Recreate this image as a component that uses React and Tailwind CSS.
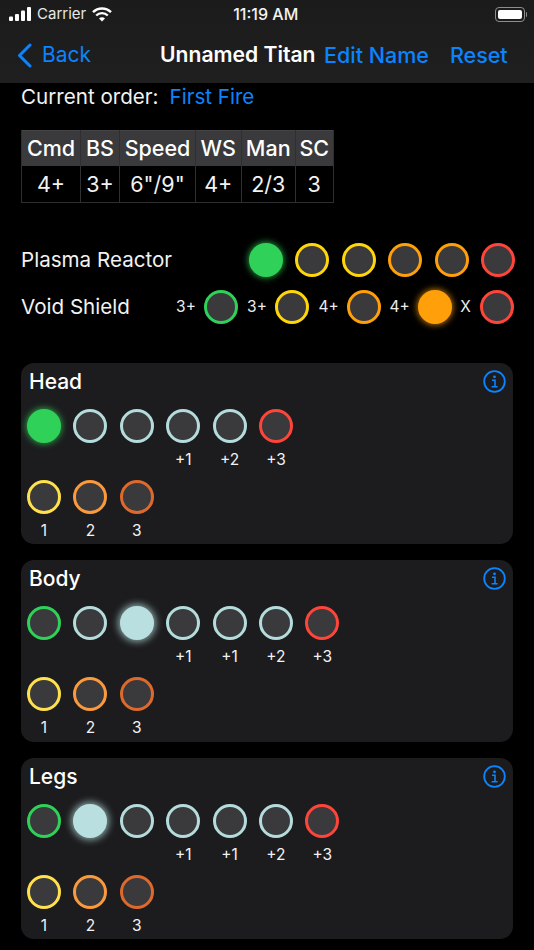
import React from "react";

const GREEN = "border-[#30d158]";
const PALE = "border-[#b5dcdc]";
const RED = "border-[#ff453a]";
const YELLOW = "border-[#ffd60a]";
const ORANGE = "border-[#ff9f0a]";

function Dot({ color, fill }) {
  return <div className={`w-[34px] h-[34px] rounded-full shrink-0 border-[3px] ${color} ${fill || "bg-[#3a3a3c]"}`} />;
}

function Slot({ color, fill, label }) {
  return (
    <div className="w-[34px] flex flex-col items-center shrink-0">
      <Dot color={color} fill={fill} />
      <div className="h-[34px] pt-[8px] text-[15.5px] leading-[18px] text-[#f2f2f2] whitespace-nowrap">{label}</div>
    </div>
  );
}

const lit = {
  green: "bg-[#30d158] shadow-[0_0_6px_1px_rgba(48,209,88,0.7)]",
  orange: "bg-[#ff9f0a] shadow-[0_0_6px_1px_rgba(255,159,10,0.7)]",
  pale: "bg-[#b9dfe0] shadow-[0_0_7px_2px_rgba(185,223,224,0.7)]",
};

function Card({ title, track }) {
  return (
    <div className="relative h-[181.5px] rounded-[13px] bg-[#1c1c1e] px-[6px] pt-[6px]">
      <div className="h-[27px] pl-[2px] text-[21px] leading-[26px] font-medium text-white">{title}</div>
      <svg className="absolute right-[7px] top-[7px] w-[23px] h-[23px]" viewBox="0 0 23 23" fill="none" stroke="#0a84ff">
        <circle cx="11.5" cy="11.5" r="10.3" strokeWidth="1.8" />
        <circle cx="11.5" cy="6.8" r="1.4" fill="#0a84ff" stroke="none" />
        <path d="M9 10.3h3v6.3M8.6 16.8h6" strokeWidth="1.6" />
      </svg>
      <div className="flex gap-[12.4px] mt-[13px]">
        {track.map((s, i) => (
          <Slot key={i} {...s} />
        ))}
      </div>
      <div className="flex gap-[12.4px] mt-[3px]">
        <Slot color="border-[#ffe14d]" label="1" />
        <Slot color="border-[#fb9a3c]" label="2" />
        <Slot color="border-[#dd6a2c]" label="3" />
      </div>
    </div>
  );
}

const head = [
  { color: GREEN, fill: lit.green },
  { color: PALE },
  { color: PALE },
  { color: PALE, label: "+1" },
  { color: PALE, label: "+2" },
  { color: RED, label: "+3" },
];
const body = [
  { color: GREEN },
  { color: PALE },
  { color: "border-[#b9dfe0]", fill: lit.pale },
  { color: PALE, label: "+1" },
  { color: PALE, label: "+1" },
  { color: PALE, label: "+2" },
  { color: RED, label: "+3" },
];
const legs = [
  { color: GREEN },
  { color: "border-[#b9dfe0]", fill: lit.pale },
  { color: PALE },
  { color: PALE, label: "+1" },
  { color: PALE, label: "+1" },
  { color: PALE, label: "+2" },
  { color: RED, label: "+3" },
];

const stats = [
  ["Cmd", "4+", "w-[59px]"],
  ["BS", "3+", "w-[39px]"],
  ["Speed", '6"/9"', "w-[76px]"],
  ["WS", "4+", "w-[45.5px]"],
  ["Man", "2/3", "w-[54.5px]"],
  ["SC", "3", "w-[37.5px]"],
];

function VoidLabel({ text, className }) {
  return <span className={`shrink-0 text-[15.5px] leading-[18px] text-[#ececec] text-center ${className}`}>{text}</span>;
}

export default function App() {
  return (
    <div className="w-[534px] h-[950px] overflow-hidden bg-black text-white font-['Inter','Liberation_Sans',sans-serif]">
      <div className="h-[83px] bg-gradient-to-b from-[#1b1b1b] to-[#1f1f1f] relative">
        <div className="h-[28px] flex items-center pl-[9px] pr-[7px] text-[15px]">
          <svg className="w-[22px] h-[14px]" viewBox="0 0 22 14" fill="#fff">
            <rect x="0" y="9.5" width="4" height="4.5" rx="1" />
            <rect x="6" y="7" width="4" height="7" rx="1" />
            <rect x="12" y="3.5" width="4" height="10.5" rx="1" />
            <rect x="18" y="0" width="4" height="14" rx="1" />
          </svg>
          <span className="ml-[6px] text-[#e8e8e8]">Carrier</span>
          <svg className="ml-[6px] w-[20px] h-[15px]" viewBox="0 0 20 15" fill="none" stroke="#fff" strokeWidth="2.4">
            <path d="M1 5.2a12.8 12.8 0 0 1 18 0" />
            <path d="M4.2 8.5a8.3 8.3 0 0 1 11.6 0" />
            <path d="M10 14.6l-3-3.2a4.2 4.2 0 0 1 6 0z" fill="#fff" stroke="none" />
          </svg>
          <span className="ml-[121px] text-[16px] font-medium text-[#f2f2f2]">11:19 AM</span>
          <div className="ml-auto flex items-center">
            <div className="w-[30px] h-[15px] rounded-[4px] border border-[#8e8e8e] p-[2px]">
              <div className="w-full h-full rounded-[2px] bg-white" />
            </div>
            <div className="w-[1.5px] h-[5px] ml-[1px] bg-[#8e8e8e] rounded-r" />
          </div>
        </div>
        <div className="h-[53px] flex items-center text-[21.5px] leading-[28px] pl-[17px]">
          <svg className="mt-[2px] w-[15px] h-[25px]" viewBox="0 0 15 25" fill="none" stroke="#0a84ff" strokeWidth="3" strokeLinecap="round" strokeLinejoin="round">
            <path d="M13 2L2.5 12.5 13 23" />
          </svg>
          <span className="ml-[10px] text-[21px] text-[#0a84ff]">Back</span>
          <span className="ml-[69px] text-[21.1px] font-semibold text-white whitespace-nowrap">Unnamed Titan</span>
          <span className="ml-[8.5px] font-medium text-[#0a84ff] whitespace-nowrap">Edit Name</span>
          <span className="ml-[21px] font-medium text-[#0a84ff]">Reset</span>
        </div>
      </div>

      <div className="px-[21px]">
        <div className="flex h-[27px] items-center text-[20.6px] leading-[27px]">
          <span className="text-[#f2f2f2]">Current order:</span>
          <span className="ml-[11px] text-[#0a84ff]">First Fire</span>
        </div>

        <div className="mt-[20px] flex w-max border-r-[1.5px] border-[#2f2f31]">
          {stats.map(([name, value, width]) => (
            <div key={name} className={`${width} border-l-[1.5px] border-[#2f2f31] flex flex-col items-center text-[21.5px]`}>
              <div className="w-full h-[36px] bg-[#3a3a3c] border-t-[1.5px] border-[#454547] flex items-center justify-center font-medium">{name}</div>
              <div className="w-full h-[36.5px] border-b-[1.5px] border-[#2f2f31] flex items-center justify-center text-[#f2f2f2]">{value}</div>
            </div>
          ))}
        </div>

        <div className="mt-[40px] h-[34px] flex items-center justify-between mr-[-2px]">
          <span className="pt-[1px] text-[20.6px] text-[#f2f2f2]">Plasma Reactor</span>
          <div className="flex gap-[12.5px]">
            <Dot color={GREEN} fill={lit.green} />
            <Dot color={YELLOW} />
            <Dot color={YELLOW} />
            <Dot color={ORANGE} />
            <Dot color={ORANGE} />
            <Dot color={RED} />
          </div>
        </div>

        <div className="mt-[13px] h-[34px] flex items-center mr-[-2px]">
          <span className="w-[155px] shrink-0 pt-[1px] text-[20.6px] text-[#f2f2f2] whitespace-nowrap">Void Shield</span>
          <VoidLabel text="3+" className="w-[20px]" />
          <div className="ml-[8px]"><Dot color={GREEN} /></div>
          <VoidLabel text="3+" className="ml-[9px] w-[20px]" />
          <div className="ml-[8px]"><Dot color={YELLOW} /></div>
          <VoidLabel text="4+" className="ml-[9.5px] w-[20px]" />
          <div className="ml-[8px]"><Dot color={ORANGE} /></div>
          <VoidLabel text="4+" className="ml-[9px] w-[20px]" />
          <div className="ml-[8px]"><Dot color={ORANGE} fill={lit.orange} /></div>
          <VoidLabel text="X" className="ml-[8px] w-[12px]" />
          <div className="ml-[8px]"><Dot color={RED} /></div>
        </div>

        <div className="mt-[39px] flex flex-col gap-[16px] w-[492px]">
          <Card title="Head" track={head} />
          <Card title="Body" track={body} />
          <Card title="Legs" track={legs} />
        </div>
      </div>
    </div>
  );
}
